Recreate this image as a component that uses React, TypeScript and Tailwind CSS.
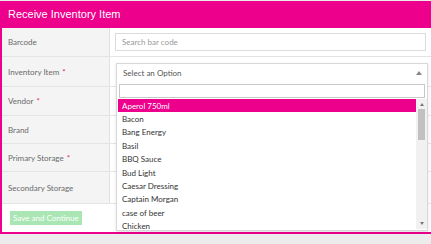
import { useState } from "react";

const rows = [
  { label: "Barcode", req: false, h: "h-[29px]" },
  { label: "Inventory Item", req: true, h: "h-[30px]" },
  { label: "Vendor", req: true, h: "h-[29px]" },
  { label: "Brand", req: false, h: "h-[28px]" },
  { label: "Primary Storage", req: true, h: "h-[28px]" },
  { label: "Secondary Storage", req: false, h: "h-[32px]" },
];

const options = [
  "Aperol 750ml",
  "Bacon",
  "Bang Energy",
  "Basil",
  "BBQ Sauce",
  "Bud Light",
  "Caesar Dressing",
  "Captain Morgan",
  "case of beer",
  "Chicken",
];

export default function App() {
  const [selected] = useState(0);

  return (
    <div className="w-[431px] h-[244px] bg-[#ececec] overflow-hidden font-['Lato',sans-serif] pt-px">
      <div className="relative w-[433px] h-[233px] bg-white border-2 border-t-0 border-[#ec008c]">
        {/* Header */}
        <div className="h-[27px] bg-[#ec008c] text-white pl-[6px] flex items-center text-[11px] font-['Liberation_Sans',Arial,sans-serif]">
          Receive Inventory Item
        </div>

        {/* Form rows */}
        {rows.map((r, i) => (
          <div key={i} className={`flex border-b border-[#e4e4e4] ${r.h}`}>
            <div className="w-[108px] shrink-0 bg-[#f4f4f4] border-r border-[#e2e2e2] pl-[6px] flex items-center text-[8px] text-[#6a6a6a]">
              {r.label}
              {r.req && <span className="text-[#e0245e] ml-[3px]">*</span>}
            </div>
            <div className="flex-1 pl-[5px] pr-[5px] flex items-center">
              {i === 0 && (
                <div className="w-[311px] h-[18px] border border-[#dcdcdc] flex items-center pl-[6px] text-[8px] text-[#999]">
                  Search bar code
                </div>
              )}
            </div>
          </div>
        ))}

        {/* Footer */}
        <div className="h-[28px] pl-[8px] pt-[7px] flex items-start">
          <button className="h-[14px] px-[3px] bg-[#a9e6b4] text-white text-[8px] leading-[14px]">
            Save and Continue
          </button>
        </div>

        {/* Open select with dropdown */}
        <div className="absolute left-[114px] top-[62px] w-[312px] bg-white border border-[#d8d8d8] shadow-sm">
          <div className="h-[18px] flex items-center justify-between pl-[6px] pr-[5px] text-[8px] text-[#555]">
            Select an Option
            <span className="w-0 h-0 border-l-[3px] border-r-[3px] border-b-[4px] border-l-transparent border-r-transparent border-b-[#888]" />
          </div>
          <div className="px-[2px] pt-[2px]">
            <div className="h-[14px] border border-[#c8c8c8] bg-white" />
          </div>
          <div className="flex mt-[1px] pl-[1px] pb-[1px]">
            <div className="flex-1 h-[130px] overflow-hidden">
              {options.map((o, i) => (
                <div
                  key={o}
                  className={`h-[13.4px] flex items-center pl-[4px] text-[8px] ${
                    i === selected ? "bg-[#ec008c] text-white" : "text-[#333]"
                  }`}
                >
                  {o}
                </div>
              ))}
            </div>
            <div className="w-[11px] h-[130px] bg-[#f1f1f1] flex flex-col items-center">
              <span className="mt-[4px] w-0 h-0 border-l-[2px] border-r-[2px] border-b-[3px] border-l-transparent border-r-transparent border-b-[#777]" />
              <div className="mt-[3px] w-[7px] h-[31px] bg-[#c1c1c1]" />
              <div className="flex-1" />
              <span className="mb-[4px] w-0 h-0 border-l-[2px] border-r-[2px] border-t-[3px] border-l-transparent border-r-transparent border-t-[#777]" />
            </div>
          </div>
        </div>
      </div>
    </div>
  );
}
